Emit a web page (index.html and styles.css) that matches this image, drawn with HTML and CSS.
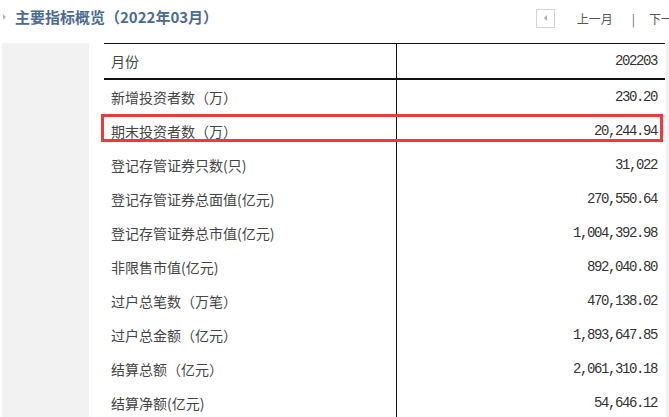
FILE: index.html
```html
<!DOCTYPE html>
<html lang="zh-CN">
<head>
<meta charset="utf-8">
<link rel="stylesheet" href="styles.css">
</head>
<body>
<div class="page">
  <header class="topbar">
    <div class="title-wrap">
      <span class="title-arrow"></span>
      <h1 class="title">主要指标概览（2022年03月）</h1>
    </div>
    <nav class="pager">
      <span class="pager-btn"><span class="pager-tri"></span></span>
      <span class="pager-link prev">上一月</span>
      <span class="pager-sep">|</span>
      <span class="pager-link next">下一月</span>
    </nav>
  </header>
  <main class="main">
    <aside class="sidebar"></aside>
    <section class="table-wrap">
      <table class="data">
        <thead>
          <tr><th class="label">月份</th><th class="num">202203</th></tr>
        </thead>
        <tbody>
          <tr><td class="label">新增投资者数（万）</td><td class="num">230.20</td></tr>
          <tr><td class="label">期末投资者数（万）</td><td class="num">20,244.94</td></tr>
          <tr><td class="label">登记存管证券只数(只)</td><td class="num">31,022</td></tr>
          <tr><td class="label">登记存管证券总面值(亿元)</td><td class="num">270,550.64</td></tr>
          <tr><td class="label">登记存管证券总市值(亿元)</td><td class="num">1,004,392.98</td></tr>
          <tr><td class="label">非限售市值(亿元)</td><td class="num">892,040.80</td></tr>
          <tr><td class="label">过户总笔数（万笔）</td><td class="num">470,138.02</td></tr>
          <tr><td class="label">过户总金额（亿元）</td><td class="num">1,893,647.85</td></tr>
          <tr><td class="label">结算总额（亿元）</td><td class="num">2,061,310.18</td></tr>
          <tr><td class="label">结算净额(亿元)</td><td class="num">54,646.12</td></tr>
        </tbody>
      </table>
      <div class="highlight"></div>
    </section>
    <aside class="rightstrip"></aside>
  </main>
</div>
</body>
</html>
```
FILE: styles.css
```css
html, body {
  margin: 0;
  padding: 0;
  background: #ffffff;
  overflow: hidden;
}
body {
  font-family: "Noto Sans CJK SC", "Noto Sans", sans-serif;
  color: #333;
}
.page {
  width: 669px;
  height: 417px;
  display: flex;
  flex-direction: column;
}
.topbar {
  height: 43px;
  display: flex;
  justify-content: space-between;
  align-items: flex-start;
}
.title-wrap {
  display: flex;
  align-items: center;
  height: 34px;
}
.title-arrow {
  width: 0;
  height: 0;
  margin-left: 3px;
  border-top: 3px solid transparent;
  border-bottom: 3px solid transparent;
  border-left: 3px solid #b8b8b8;
}
.title {
  margin: 0 0 0 9px;
  font-size: 15px;
  font-weight: bold;
  color: #4a6a94;
  line-height: 20px;
  white-space: nowrap;
}
.pager {
  display: flex;
  align-items: center;
  height: 36px;
  font-size: 12px;
  color: #555;
  white-space: nowrap;
  margin-right: -16px;
}
.pager-btn {
  width: 17px;
  height: 17px;
  border: 1px solid #d4d4d4;
  display: flex;
  align-items: center;
  justify-content: center;
}
.pager-tri {
  width: 0;
  height: 0;
  border-top: 3px solid transparent;
  border-bottom: 3px solid transparent;
  border-right: 3px solid #aaa;
}
.pager-link.prev {
  margin-left: 22px;
}
.pager-sep {
  margin-left: 19px;
  font-size: 12px;
  color: #666;
}
.pager-link.next {
  margin-left: 14px;
}
.main {
  flex: 1;
  display: flex;
  min-height: 0;
}
.sidebar {
  width: 87px;
  margin-left: 2px;
  background: #f2f2f2;
}
.table-wrap {
  position: relative;
  width: 561px;
  margin-left: 15px;
}
.rightstrip {
  width: 3px;
  margin-left: 1px;
  background: #f2f2f2;
}
.data {
  width: 561px;
  border-collapse: collapse;
  border-top: 1px solid #111;
}
.data th, .data td {
  height: 34px;
  padding: 0;
  font-weight: normal;
}
.data thead th {
  border-bottom: 2px solid #111;
}
.data .label {
  width: 292px;
  padding-left: 7px;
  text-align: left;
  font-size: 14px;
  color: #444;
  border-right: 1px solid #111;
  box-sizing: border-box;
}
.data .num {
  text-align: right;
  padding-right: 8px;
  font-family: "Liberation Mono", monospace;
  font-size: 14px;
  letter-spacing: -1.4px;
  color: #333;
}
.highlight {
  position: absolute;
  left: -3px;
  top: 71px;
  width: 556px;
  height: 22px;
  border: 3px solid #f03a3a;
}
```
